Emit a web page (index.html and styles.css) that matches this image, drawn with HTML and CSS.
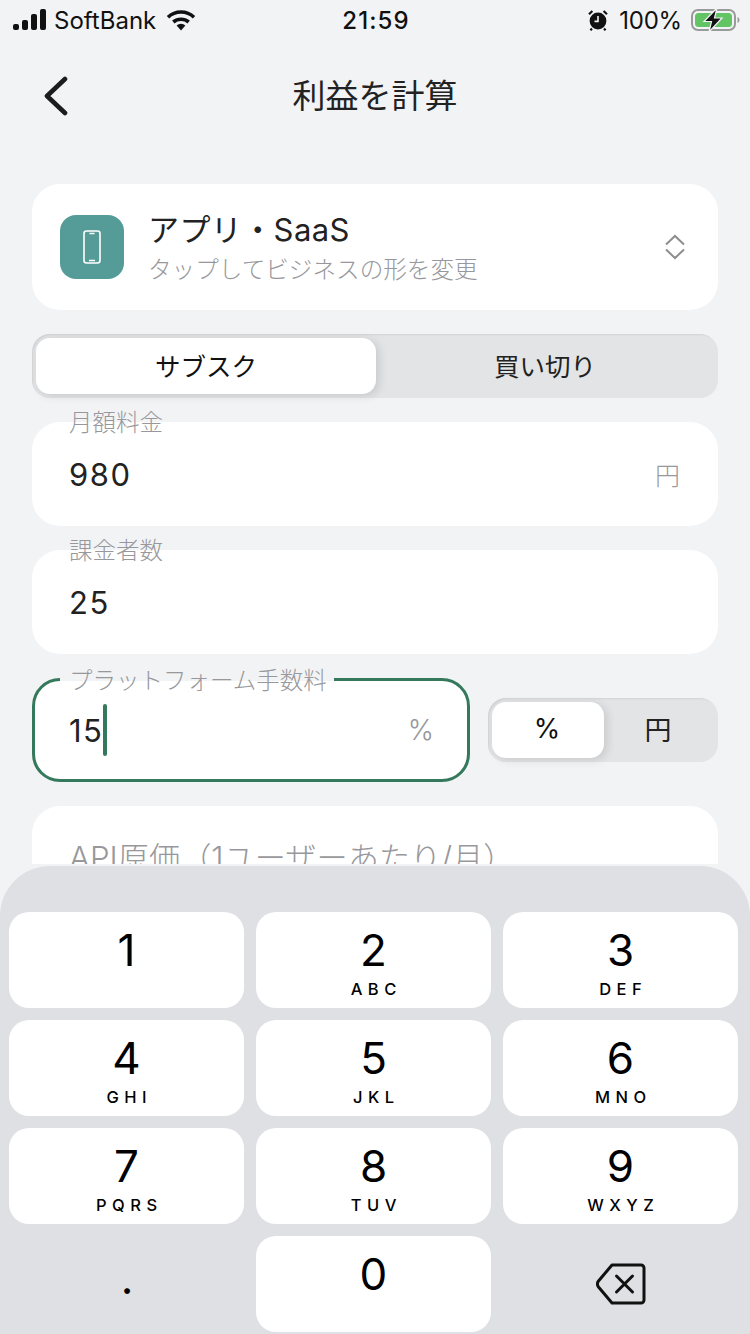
FILE: index.html
```html
<!DOCTYPE html>
<html lang="ja">
<head>
  <meta charset="UTF-8" />
  <meta name="viewport" content="width=device-width, initial-scale=1.0" />
  <title>利益を計算</title>
  <link rel="stylesheet" href="styles.css">
</head>
<body>
  <div class="screen">
    <div class="content">
      <!-- Status bar -->
      <div class="status-bar">
        <div class="status-left">
          <svg class="signal" width="34" height="22" viewBox="0 0 34 22"><rect x="0" y="15" width="6" height="6" rx="2"/><rect x="9" y="11" width="6" height="10" rx="2"/><rect x="18" y="5" width="6" height="16" rx="2"/><rect x="27" y="0" width="6" height="21" rx="2"/></svg>
          <span>SoftBank</span>
          <svg class="wifi" width="30" height="22" viewBox="0 0 30 22"><path d="M15 21.500 10.600 16.600a6.400 6.400 0 0 1 8.800 0z"/><path d="M2 8.200a19 19 0 0 1 26 0" class="arc"/><path d="M7.300 13a12 12 0 0 1 15.400 0" class="arc"/></svg>
        </div>
        <div class="status-time">21:59</div>
        <div class="status-right">
          <svg class="alarm" width="20" height="22" viewBox="0 0 20 22"><circle cx="10" cy="12" r="8.400"/><path d="M1 5.200 4.400 2M19 5.200 15.600 2M4 19.600l-1.600 1.600M16 19.600l1.600 1.600" class="alarm-leg"/><path d="M10 7v5.400H6.500" class="alarm-hand"/></svg>
          <span>100%</span>
          <svg class="battery" width="50" height="24" viewBox="0 0 50 24">
            <rect x="1" y="2" width="43" height="20" rx="6" fill="none" stroke="#9a9a9a" stroke-width="2"/>
            <rect x="4" y="5" width="37" height="14" rx="3.500" fill="#63c466"/>
            <path d="M46.500 9v6c1.400-.5 2-1.700 2-3s-.6-2.500-2-3z" fill="#9a9a9a"/>
            <path d="M26 0 13 13.500h7.500L18 24 31 10h-7.500z" fill="#111" stroke="#f2f3f5" stroke-width="1.200"/>
          </svg>
        </div>
      </div>

      <!-- Header -->
      <header class="nav">
        <svg class="back" width="28" height="40" viewBox="0 0 28 40"><path d="M23 3 5 20l18 17"/></svg>
        <h1>利益を計算</h1>
      </header>

      <div class="form">
        <!-- Business type -->
        <div class="card biz">
          <div class="biz-icon">
            <svg width="18" height="34" viewBox="0 0 18 34"><rect x="1" y="1" width="16" height="32" rx="2.500"/><path d="M6.500 3.500h5M6 30.500h6"/></svg>
          </div>
          <div class="biz-text">
            <div class="biz-title">アプリ・SaaS</div>
            <div class="biz-sub">タップしてビジネスの形を変更</div>
          </div>
          <svg class="updown" width="22" height="26" viewBox="0 0 22 26"><path d="M2 10.500 11 2l9 8.500M2 15.500l9 8.500 9-8.500"/></svg>
        </div>

        <!-- Plan type -->
        <div class="segment">
          <div class="seg-item active">サブスク</div>
          <div class="seg-item">買い切り</div>
        </div>

        <div class="card field">
          <span class="field-label">月額料金</span>
          <span class="field-value">980</span>
          <span class="field-unit">円</span>
        </div>

        <div class="card field">
          <span class="field-label">課金者数</span>
          <span class="field-value">25</span>
        </div>

        <div class="fee-row">
          <div class="card field focused">
            <span class="field-label">プラットフォーム手数料</span>
            <span class="field-value">15<i class="caret"></i></span>
            <span class="field-unit">%</span>
          </div>
          <div class="segment small">
            <div class="seg-item active">%</div>
            <div class="seg-item">円</div>
          </div>
        </div>

        <div class="card field placeholder">
          <span class="field-ph">API原価（1ユーザーあたり/月）</span>
        </div>
      </div>
    </div>

    <!-- Number keypad -->
    <div class="keyboard">
      <div class="key"><b>1</b></div>
      <div class="key"><b>2</b><small>ABC</small></div>
      <div class="key"><b>3</b><small>DEF</small></div>
      <div class="key"><b>4</b><small>GHI</small></div>
      <div class="key"><b>5</b><small>JKL</small></div>
      <div class="key"><b>6</b><small>MNO</small></div>
      <div class="key"><b>7</b><small>PQRS</small></div>
      <div class="key"><b>8</b><small>TUV</small></div>
      <div class="key"><b>9</b><small>WXYZ</small></div>
      <div class="key flat"><b class="dot">.</b></div>
      <div class="key"><b>0</b></div>
      <div class="key flat">
        <svg class="del" width="50" height="42" viewBox="0 0 50 42"><path d="M16 2h29a3 3 0 0 1 3 3v32a3 3 0 0 1-3 3H16L2.500 24a5 5 0 0 1 0-6z"/><path d="M20.500 13 36.500 29M36.500 13 20.500 29"/></svg>
      </div>
    </div>
  </div>
</body>
</html>
```

FILE: styles.css
```css
/* Global styles */
html, body {
  margin: 0;
  height: 100%;
}
body {
  background: #f2f3f5;
  color: #1c1c1e;
  font-family: Inter, "Noto Sans CJK JP", sans-serif;
  overflow: hidden;
}
.screen {
  width: 750px;
  height: 1334px;
  display: flex;
  flex-direction: column;
  overflow: hidden;
}
.content {
  height: 864px;
  overflow: hidden;
  flex: none;
}
/* Status bar */
.status-bar {
  height: 40px;
  padding: 0 9px 0 13px;
  display: flex;
  align-items: center;
  justify-content: space-between;
  font-size: 24px;
  color: #111;
}
.status-left,
.status-right {
  display: flex;
  align-items: center;
  width: 240px;
}
.status-right {
  justify-content: flex-end;
}
.status-left span {
  margin: 0 10px 0 7px;
}
.status-right span {
  margin: 0 9px 0 11px;
  letter-spacing: -0.2px;
}
.status-time {
  font-weight: 500;
  letter-spacing: 1.100px;
  margin-left: -2px;
}
.signal,
.wifi path,
.alarm circle {
  fill: #111;
}
.wifi .arc {
  fill: none;
  stroke: #111;
  stroke-width: 3.600;
}
.alarm-leg {
  fill: none;
  stroke: #111;
  stroke-width: 2.200;
}
.alarm-hand {
  fill: none;
  stroke: #f2f3f5;
  stroke-width: 1.600;
}
.battery {
  overflow: visible;
}
/* Header */
.nav {
  height: 110px;
  display: flex;
  align-items: center;
  justify-content: center;
  position: relative;
}
.nav h1 {
  margin: 0 0 2px;
  font-size: 33px;
  font-weight: 400;
  color: #222;
}
.back {
  position: absolute;
  left: 42px;
  top: 36px;
  fill: none;
  stroke: #1c1c1e;
  stroke-width: 4.600;
  stroke-linecap: round;
  stroke-linejoin: round;
}
/* Form */
.form {
  padding: 34px 32px 0;
  display: flex;
  flex-direction: column;
  gap: 24px;
}
.card {
  background: #fff;
  border-radius: 28px;
}
.biz {
  height: 126px;
  display: flex;
  align-items: center;
  padding: 0 28px;
}
.biz-icon {
  width: 64px;
  height: 64px;
  flex: none;
  margin-right: 24px;
  border-radius: 16px;
  background: #559c98;
  display: flex;
  align-items: center;
  justify-content: center;
}
.biz-icon svg {
  fill: none;
  stroke: #fff;
  stroke-width: 1.600;
}
.biz-text {
  flex: 1;
  padding-top: 5px;
}
.biz-title {
  font-size: 31px;
  line-height: 40px;
  letter-spacing: 0.4px;
  color: #222;
}
.biz-sub {
  font-size: 23.600px;
  line-height: 40px;
  font-weight: 300;
  color: #98989c;
}
.updown {
  margin-right: 4px;
  fill: none;
  stroke: #8e8e8e;
  stroke-width: 2;
}
/* Segmented control */
.segment {
  height: 64px;
  padding: 4px;
  box-sizing: border-box;
  background: #e3e4e6;
  border-radius: 18px;
  display: flex;
  box-shadow: inset 2px 2px 2px -1px rgba(0,0,0,0.08);
}
.seg-item {
  flex: 1;
  box-sizing: border-box;
  padding-bottom: 4px;
  display: flex;
  align-items: center;
  justify-content: center;
  font-size: 25.500px;
  color: #222;
  border-radius: 14px;
}
.seg-item.active {
  flex: 0 0 340px;
  background: #fff;
  color: #111;
  box-shadow: 3px 2px 10px rgba(0,0,0,0.12);
}
.segment.small {
  width: 230px;
  flex: none;
}
.segment.small .seg-item {
  font-size: 27px;
  padding-right: 2px;
}
.segment.small .seg-item.active {
  flex: 0 0 112px;
}
/* Fields */
.field {
  height: 104px;
  display: flex;
  align-items: center;
  justify-content: space-between;
  padding: 0 38px 0 37px;
  box-sizing: border-box;
  position: relative;
}
.field-label {
  position: absolute;
  left: 37px;
  top: -13px;
  font-size: 23.500px;
  line-height: 28px;
  font-weight: 300;
  color: #98989c;
}
.field-value {
  font-size: 31px;
  letter-spacing: 1.500px;
  color: #222;
  display: flex;
  align-items: center;
}
.field-unit {
  font-size: 25px;
  font-weight: 300;
  color: #98989c;
}
.fee-row {
  display: flex;
  align-items: center;
  gap: 18px;
}
.focused {
  flex: 1;
  border: 3px solid #35795c;
  padding: 0 33px 0 34px;
}
.focused .field-label {
  left: 25px;
  top: -14px;
  padding: 0 7px 0 9px;
  background: linear-gradient(#f2f3f5 50%, #fff 50%);
}
.focused .field-value {
  letter-spacing: 1.500px;
}
.focused .field-unit {
  font-size: 28px;
}
.caret {
  width: 4px;
  height: 52px;
  border-radius: 2px;
  background: #35795c;
  margin-left: 0;
}
.placeholder {
  align-items: flex-start;
  padding-top: 32px;
}
.field-ph {
  font-size: 31.200px;
  line-height: 40px;
  font-weight: 300;
  color: #98989c;
  white-space: nowrap;
}
/* Keypad */
.keyboard {
  flex: none;
  margin-top: 2px;
  height: 468px;
  box-sizing: border-box;
  padding: 46px 12px 0 9px;
  background: #dfe0e4;
  border-radius: 50px 50px 0 0;
  display: grid;
  grid-template-columns: repeat(3, 235px);
  grid-auto-rows: 96px;
  column-gap: 12px;
  row-gap: 12px;
}
.key {
  background: #fff;
  border-radius: 20px;
  display: flex;
  flex-direction: column;
  align-items: center;
  color: #000;
}
.key b {
  font-weight: 400;
  font-size: 44px;
  line-height: 50px;
  margin-top: 13px;
}
.key small {
  font-size: 16.500px;
  font-weight: 500;
  line-height: 20px;
  letter-spacing: 5.500px;
  margin-right: -5.500px;
  margin-top: 4px;
}
.key.flat {
  background: none;
  justify-content: center;
}
.key .dot {
  margin: 0 0 13px 1px;
}
.del {
  fill: none;
  stroke: #111;
  stroke-width: 3;
  stroke-linecap: round;
  stroke-linejoin: round;
}
```
